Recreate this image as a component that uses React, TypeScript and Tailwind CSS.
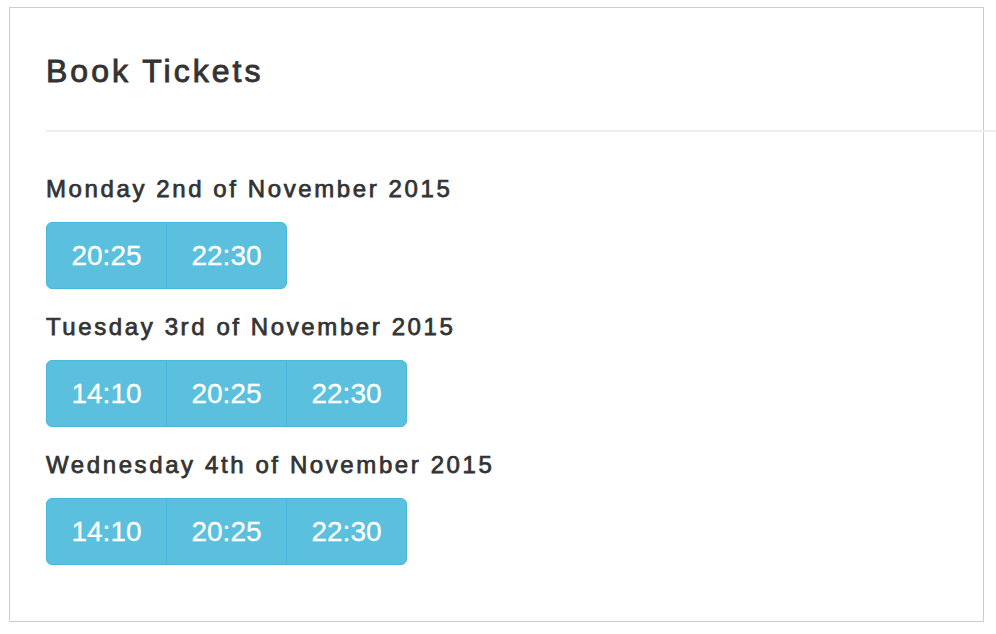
const SHOWINGS = [
  { day: 'Monday 2nd of November 2015', times: ['20:25', '22:30'] },
  { day: 'Tuesday 3rd of November 2015', times: ['14:10', '20:25', '22:30'] },
  { day: 'Wednesday 4th of November 2015', times: ['14:10', '20:25', '22:30'] },
];

function TimeGroup({ times }: { times: string[] }) {
  return (
    <div className="flex">
      {times.map((t, i) => (
        <button
          key={t}
          className={
            'flex h-[67px] w-[121px] items-center justify-center border border-[#46b8da] bg-[#5bc0de] text-[28px] leading-none text-white [-webkit-text-stroke:0.3px_#fff] ' +
            (i === 0 ? 'rounded-l-[6px] ' : '-ml-px ') +
            (i === times.length - 1 ? 'rounded-r-[6px]' : '')
          }
        >
          {t}
        </button>
      ))}
    </div>
  );
}

export default function App() {
  return (
    <div className="min-h-[634px] bg-white pl-[9px] pt-[7px] font-['Liberation_Sans',Arial,sans-serif] text-[#333]">
      <div className="w-[975px] border border-[#cccccc] pb-[56px] pl-[36px] pt-[45px]">
        <h3 className="text-[32px] leading-[36px] tracking-[3px] [-webkit-text-stroke:0.9px_#333]">
          Book Tickets
        </h3>
        <hr className="mt-[41px] h-[2px] w-[950px] border-0 bg-[#eeeeee]" />

        <div className="mt-[43px] flex flex-col gap-[24px]">
          {SHOWINGS.map((s) => (
            <div key={s.day} className="flex flex-col gap-[19px]">
              <h4 className="text-[24px] leading-[28px] tracking-[2.6px] [-webkit-text-stroke:0.75px_#333]">
                {s.day}
              </h4>
              <TimeGroup times={s.times} />
            </div>
          ))}
        </div>
      </div>
    </div>
  );
}
